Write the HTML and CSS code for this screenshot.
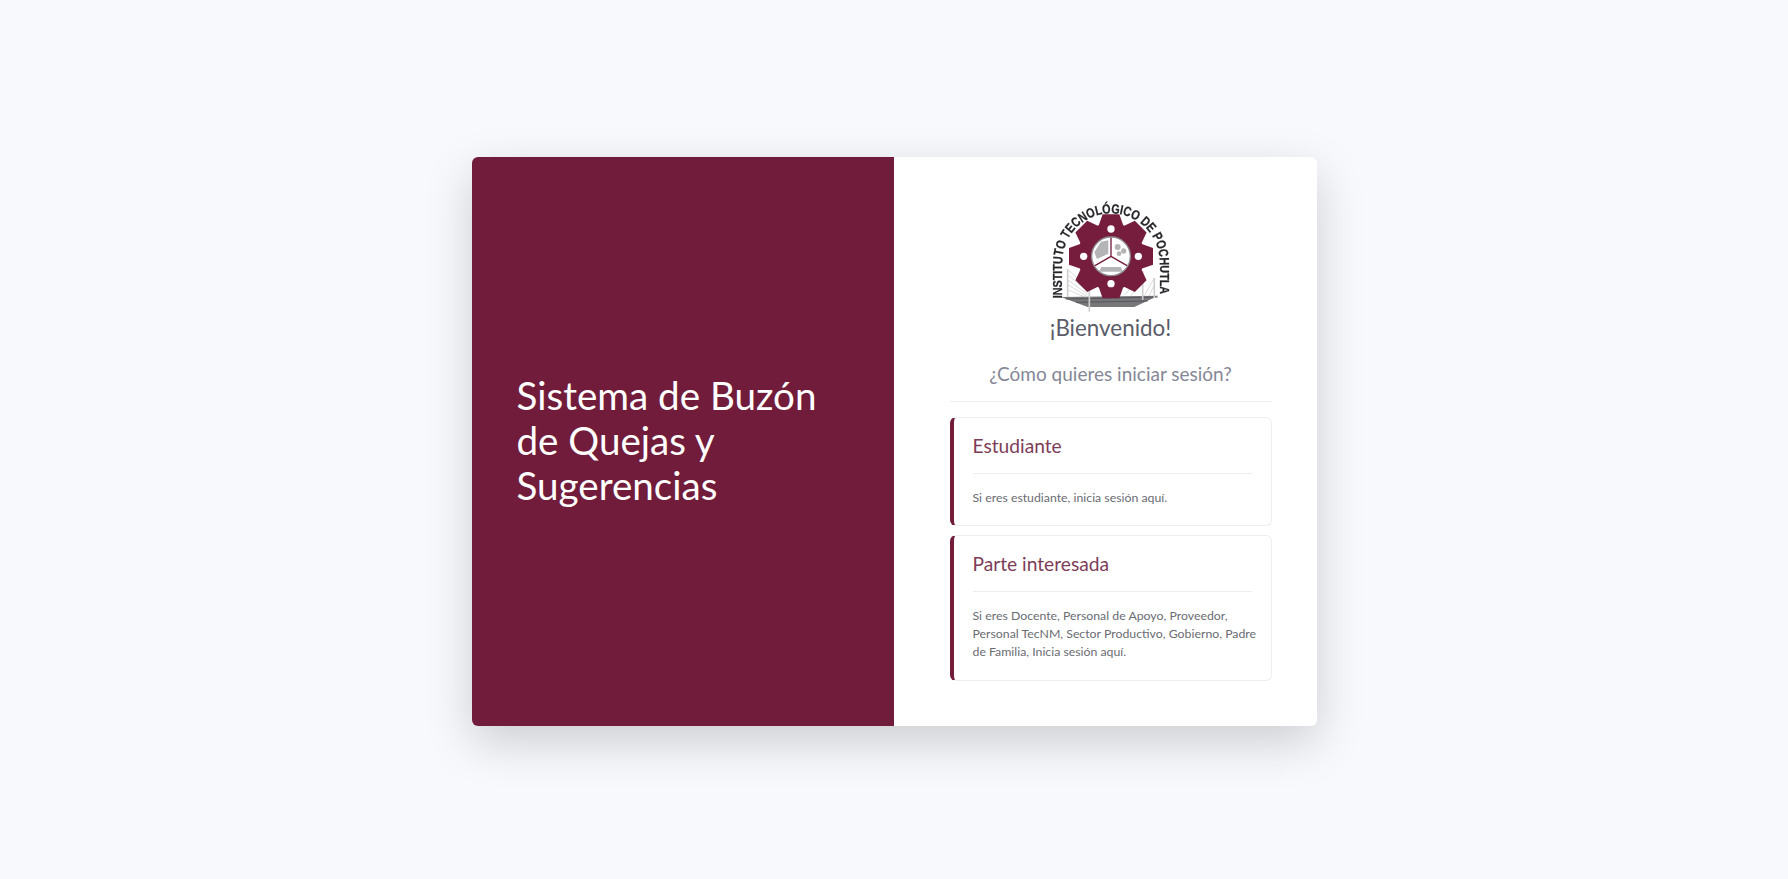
FILE: index.html
```html
<!DOCTYPE html>
<html lang="es">
<head>
<meta charset="utf-8">
<title>Sistema de Buzón de Quejas y Sugerencias</title>
<link rel="stylesheet" href="styles.css">
</head>
<body>
<main class="page">
  <section class="panel">
    <div class="brand">
      <h1 class="brand-title">Sistema de Buzón de Quejas y Sugerencias</h1>
    </div>
    <div class="login">
      <svg class="logo" viewBox="0 -32 360 342" role="img" aria-label="Instituto Tecnológico de Pochutla">
        <defs>
          <path id="arc" d="M34 266 L34 157 A146 146 0 0 1 326 157 L326 266"/>
          <polygon id="tooth" points="155,14 205,14 222,62 138,62"/>
        </defs>
        <polygon points="30,262 322,258 250,292 110,292" fill="#77777a"/>
        <path d="M45 268 L320 262 M75 278 L290 274" stroke="#55555a" stroke-width="3" fill="none"/>
        <g stroke="#b5b5b8" stroke-width="1.5" fill="none">
          <path d="M50 180 L115 236 M50 195 L112 246 M50 210 L110 254 M50 225 L108 260 M50 240 L105 264 M275 190 L222 255 M275 210 L240 258 M310 205 L280 258 M310 225 L295 258"/>
        </g>
        <g stroke="#cfcfd2" stroke-width="5" fill="none">
          <path d="M50 178 L50 262 M115 228 L115 306 M275 185 L275 270 M310 205 L310 265"/>
        </g>
        <g fill="#761c3d">
          <circle cx="180" cy="140" r="100"/>
          <use href="#tooth"/>
          <use href="#tooth" transform="rotate(45 180 140)"/>
          <use href="#tooth" transform="rotate(90 180 140)"/>
          <use href="#tooth" transform="rotate(135 180 140)"/>
          <use href="#tooth" transform="rotate(180 180 140)"/>
          <use href="#tooth" transform="rotate(225 180 140)"/>
          <use href="#tooth" transform="rotate(270 180 140)"/>
          <use href="#tooth" transform="rotate(315 180 140)"/>
        </g>
        <g fill="#fff">
          <circle cx="180" cy="58" r="11"/>
          <circle cx="98" cy="140" r="11"/>
          <circle cx="262" cy="140" r="11"/>
          <circle cx="180" cy="222" r="11"/>
          <circle cx="180" cy="140" r="58"/>
        </g>
        <g fill="#b4b4b7">
          <polygon points="172,92 172,132 138,148 130,128 150,96"/>
          <circle cx="200" cy="112" r="9"/>
          <circle cx="218" cy="124" r="8"/>
          <circle cx="204" cy="132" r="7"/>
          <polygon points="150,172 210,172 215,186 145,186"/>
        </g>
        <circle cx="180" cy="140" r="58" fill="none" stroke="#8e8e92" stroke-width="4"/>
        <path d="M180 84 L180 140 M180 140 L132 168 M180 140 L228 168" stroke="#761c3d" stroke-width="4" fill="none"/>
        <text class="logo-text"><textPath href="#arc" textLength="664" lengthAdjust="spacingAndGlyphs">INSTITUTO TECNOLÓGICO DE POCHUTLA</textPath></text>
      </svg>
      <h2 class="welcome">¡Bienvenido!</h2>
      <h3 class="question">¿Cómo quieres iniciar sesión?</h3>
      <hr class="rule">
      <a class="option option-first">
        <h4 class="option-title">Estudiante</h4>
        <hr class="option-rule">
        <p class="option-text">Si eres estudiante, inicia sesión aquí.</p>
      </a>
      <a class="option option-last">
        <h4 class="option-title">Parte interesada</h4>
        <hr class="option-rule">
        <p class="option-text">Si eres Docente, Personal de Apoyo, Proveedor, Personal TecNM, Sector Productivo, Gobierno, Padre de Familia, Inicia sesión aquí.</p>
      </a>
    </div>
  </section>
</main>
</body>
</html>
```
FILE: styles.css
```css
* { box-sizing: border-box; }
html, body { margin: 0; height: 100%; }
body {
  background: #f8f9fc;
  font-family: "Lato", "Noto Sans", sans-serif;
  color: #5a5c69;
}
.page {
  min-height: 100vh;
  display: flex;
  align-items: center;
  justify-content: center;
  padding-top: 4px;
}
.panel {
  width: 845px;
  height: 569px;
  display: grid;
  grid-template-columns: 422px 423px;
  background: #fff;
  border-radius: 6px;
  overflow: hidden;
  box-shadow: 0 16px 48px rgba(0, 0, 0, .175);
}
.brand {
  background: #721c3b;
  display: flex;
  align-items: center;
  padding: 0 45px 3px;
}
.brand-title {
  margin: 0;
  color: #fff;
  font-size: 38.6px;
  line-height: 45px;
  font-weight: 400;
}
.login {
  display: flex;
  flex-direction: column;
  padding: 42px 45px 44px 56px;
}
.logo {
  display: block;
  width: 120px;
  height: 114px;
  flex: none;
  align-self: center;
  filter: blur(.35px);
}
.logo-text {
  font-family: "Liberation Sans", sans-serif;
  font-weight: 700;
  font-size: 40px;
  fill: #26262a;
  stroke: #26262a;
  stroke-width: .8px;
}
.welcome {
  margin: 2px 0 0;
  text-align: center;
  font-size: 22.4px;
  line-height: 26px;
  font-weight: 400;
  color: #5a5c69;
}
.question {
  margin: 21px 0 0;
  text-align: center;
  font-size: 19px;
  line-height: 24px;
  font-weight: 400;
  color: #858796;
}
.rule {
  margin: 15px 0 15px;
  border: 0;
  border-top: 1px solid #eceef3;
}
.option {
  display: block;
  background: #fff;
  border: 1px solid #eceef3;
  border-left: 4px solid #721c3b;
  border-radius: 6px;
  padding: 16px 19px 18px 19px;
}
.option-first { margin-bottom: 9px; }
.option-last { padding-bottom: 19px; }
.option-title {
  margin: 0;
  font-size: 19.2px;
  line-height: 24px;
  font-weight: 400;
  color: #7d3d57;
}
.option-rule {
  margin: 15px 0 15px;
  border: 0;
  border-top: 1px solid #eceef3;
}
.option-text {
  margin: 0 -6px 0 0;
  font-size: 12.3px;
  line-height: 18px;
  color: #6a6c72;
}
```
